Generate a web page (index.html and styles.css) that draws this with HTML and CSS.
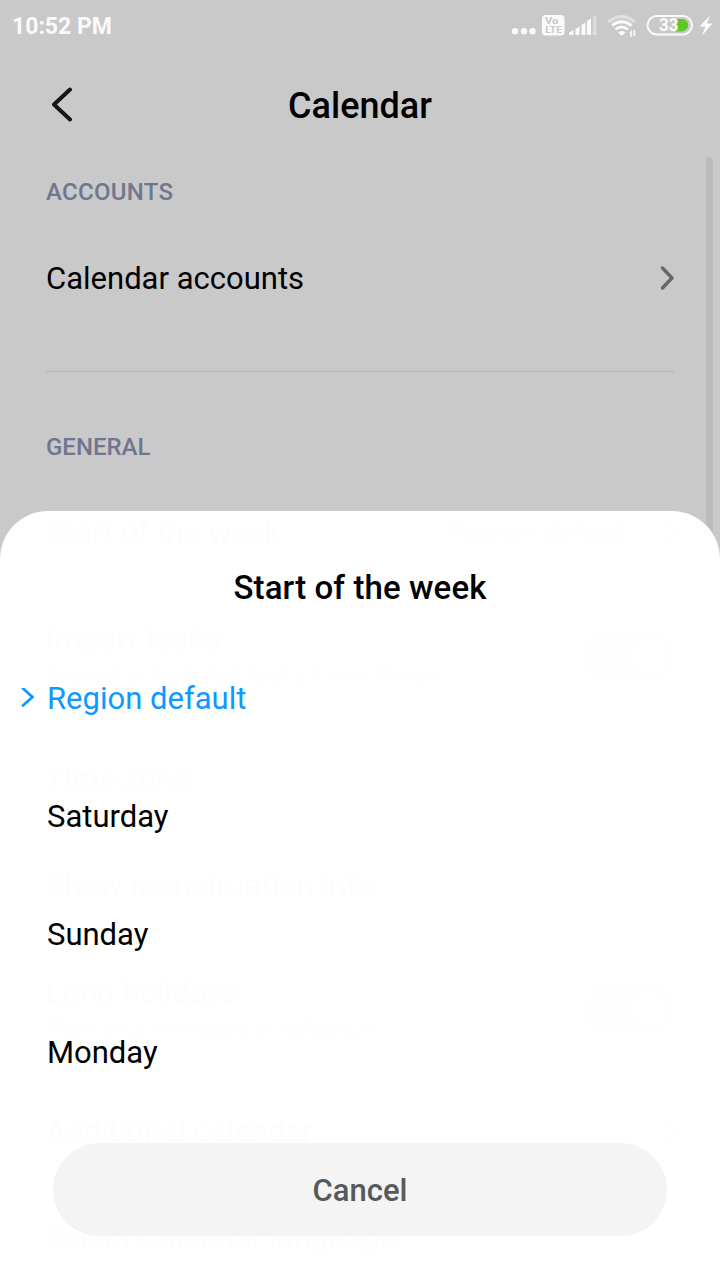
FILE: index.html
```
<!DOCTYPE html>
<html lang="en">
<head>
<meta charset="utf-8">
<title>Calendar</title>
<link rel="stylesheet" href="styles.css">
</head>
<body>
<div class="screen">
  <header class="status">
    <span class="time">10:52 PM</span>
    <svg class="status-icons" width="210" height="50" viewBox="510 0 210 50">
      <g fill="#fafafa">
        <circle cx="515" cy="31.3" r="3.2"/><circle cx="524" cy="31.3" r="3.2"/><circle cx="532.5" cy="31.3" r="3.2"/>
        <rect x="542" y="15" width="22.5" height="20.5" rx="3.5"/>
        <path d="M569 35v-2.500l4.500-2.500v5zM575.500 35v-6l4-2.500v8.500zM581.500 35v-10l4-2.500v12.500zM587 35v-14l4-2.500v16.500z"/>
        <path d="M593 35V17l3.500-2v20z" opacity=".4"/>
        <path d="M618 32.500a5.500 5.500 0 0 1 7.500 0l-3.750 3.500z"/>
        <path d="M629 33.500l2.800-3.500v7h-1.500v-3.500zM636.300 33.500l-2.800 3.500v-7h1.500v3.500z"/>
        <path d="M710 15.500l-10.500 11h6l-3.500 9 10.500-12h-5.500z"/>
      </g>
      <g fill="none" stroke="#fafafa">
        <path d="M608.500 21.800Q621.700 11.500 635 21.800" stroke-width="3" opacity=".45"/>
        <path d="M612 25.500Q621.700 18 631.500 25.500" stroke-width="3"/>
        <path d="M615.500 29.500Q621.700 24.500 628 29.500" stroke-width="2.700"/>
        <rect x="647.500" y="16" width="44.500" height="18.500" rx="9.250" stroke-width="2"/>
      </g>
      <path d="M676 19h6a6.200 6.200 0 0 1 0 12.400h-6z" fill="#62c629"/>
      <text class="volte" x="545" y="24.300" textLength="13.500" lengthAdjust="spacingAndGlyphs">Vo</text>
      <text class="volte" x="545.300" y="33" textLength="16.800" lengthAdjust="spacingAndGlyphs">LTE</text>
      <text class="charge" x="659" y="31" textLength="19.500" lengthAdjust="spacingAndGlyphs">33</text>
    </svg>
  </header>
  <div class="appbar">
    <svg class="back" width="24" height="36" viewBox="0 0 24 36"><path d="M20 2.500L4 17.500L20 32.500"/></svg>
    <h1>Calendar</h1>
  </div>
  <main class="content">
    <h2 class="accounts">ACCOUNTS</h2>
    <div class="account-row"><span>Calendar accounts</span>
      <svg width="15" height="24" viewBox="0 0 15 24"><path d="M3.500 2L13 12L3.500 22"/></svg>
    </div>
    <hr>
    <h2>GENERAL</h2>
    <div class="setting"><span>Start of the week</span><span class="value">Region default</span><i class="arrow"></i></div>
    <div class="setting tall"><div>Import tasks<small>Import scheduled tasks from Notes</small></div><i class="toggle"></i></div>
    <div class="setting"><span>Time zone</span></div>
    <div class="setting"><span>Show menstruation info</span></div>
    <div class="setting tall"><div>Long holidays<small>Plan your holidays in advance</small></div><i class="toggle"></i></div>
    <div class="setting"><span>Additional calendar</span><i class="arrow"></i></div>
    <div class="setting"><span>Select Calendar language</span></div>
  </main>
  <div class="scrollbar"></div>
  <section class="sheet">
    <h3>Start of the week</h3>
    <ul>
      <li class="selected"><svg width="14" height="20" viewBox="0 0 14 20"><path d="M3 .5L12.500 9L3 17.500"/></svg>Region default</li>
      <li>Saturday</li>
      <li>Sunday</li>
      <li>Monday</li>
    </ul>
    <button>Cancel</button>
  </section>
</div>
</body>
</html>
```
FILE: styles.css
```
* { box-sizing: border-box; }
body, h1, h2, h3, ul { margin: 0; padding: 0; }
body { font-family: Roboto, sans-serif; color: #000; }
.screen { position: relative; width: 720px; height: 1280px; overflow: hidden; background: #c9c9c9; }
.status { display: flex; justify-content: space-between; height: 50px; padding-left: 12px; }
.time { color: #fafafa; font-size: 23px; font-weight: 700; line-height: 53px; }
.volte { fill: #c9c9c9; font-size: 9.5px; font-weight: 700; }
.charge { fill: #fafafa; font-size: 17.5px; font-weight: 700; }
.appbar { display: grid; grid-template-columns: 74px 1fr 74px; align-items: center; height: 110px; }
.back { justify-self: end; }
.back path { fill: none; stroke: #161616; stroke-width: 4; stroke-linecap: round; stroke-linejoin: round; }
h1 { grid-column: 2; padding-top: 2px; text-align: center; font-size: 36px; font-weight: 500; }
.content { padding: 0 46px; }
h2 { color: #70768f; font-size: 24px; font-weight: 500; line-height: 64px; }
.accounts { letter-spacing: .3px; }
.account-row { display: flex; align-items: center; justify-content: space-between; height: 108px; font-size: 31px; }
.account-row path { fill: none; stroke: #666; stroke-width: 3.4; stroke-linecap: round; stroke-linejoin: round; }
hr { height: 1px; margin: 39px 0 43px; border: 0; background: #b3b3b3; }
.setting { display: flex; align-items: center; justify-content: space-between; height: 107px; font-size: 31px; }
.setting.tall { height: 139px; }
.setting small { display: block; margin-top: 3px; color: #666; font-size: 25px; }
.value { margin: 0 30px 0 auto; color: #666; font-size: 28px; }
.arrow { width: 14px; height: 14px; border: solid #666; border-width: 3px 3px 0 0; transform: rotate(45deg); }
.toggle { display: flex; justify-content: flex-end; width: 88px; height: 50px; padding: 7px; border-radius: 25px; background: #888; }
.toggle::after { content: ""; width: 36px; height: 36px; border-radius: 50%; background: #c9c9c9; }
.scrollbar { position: absolute; top: 157px; left: 706px; width: 7px; height: 500px; border-radius: 4px; background: #bbb; }
.sheet { position: absolute; inset: 511px 0 0; padding: 49px 0 0; border-radius: 48px 48px 0 0; background: rgba(255, 255, 255, .993); }
h3 { text-align: center; font-size: 33px; font-weight: 500; line-height: 55px; letter-spacing: .1px; }
ul { margin-top: 24px; list-style: none; }
li { display: flex; align-items: center; height: 118px; padding-left: 47px; font-size: 31px; }
.selected { gap: 13px; padding-left: 20px; color: #0d99ff; }
.selected path { fill: none; stroke: #0d99ff; stroke-width: 2.8; stroke-linecap: round; }
button { display: block; width: 614px; height: 93px; margin: 32px auto 0; padding: 2px 0 0; border: 0; border-radius: 47px; background: #f4f4f4; color: #595959; font: 500 31px Roboto, sans-serif; }
```
